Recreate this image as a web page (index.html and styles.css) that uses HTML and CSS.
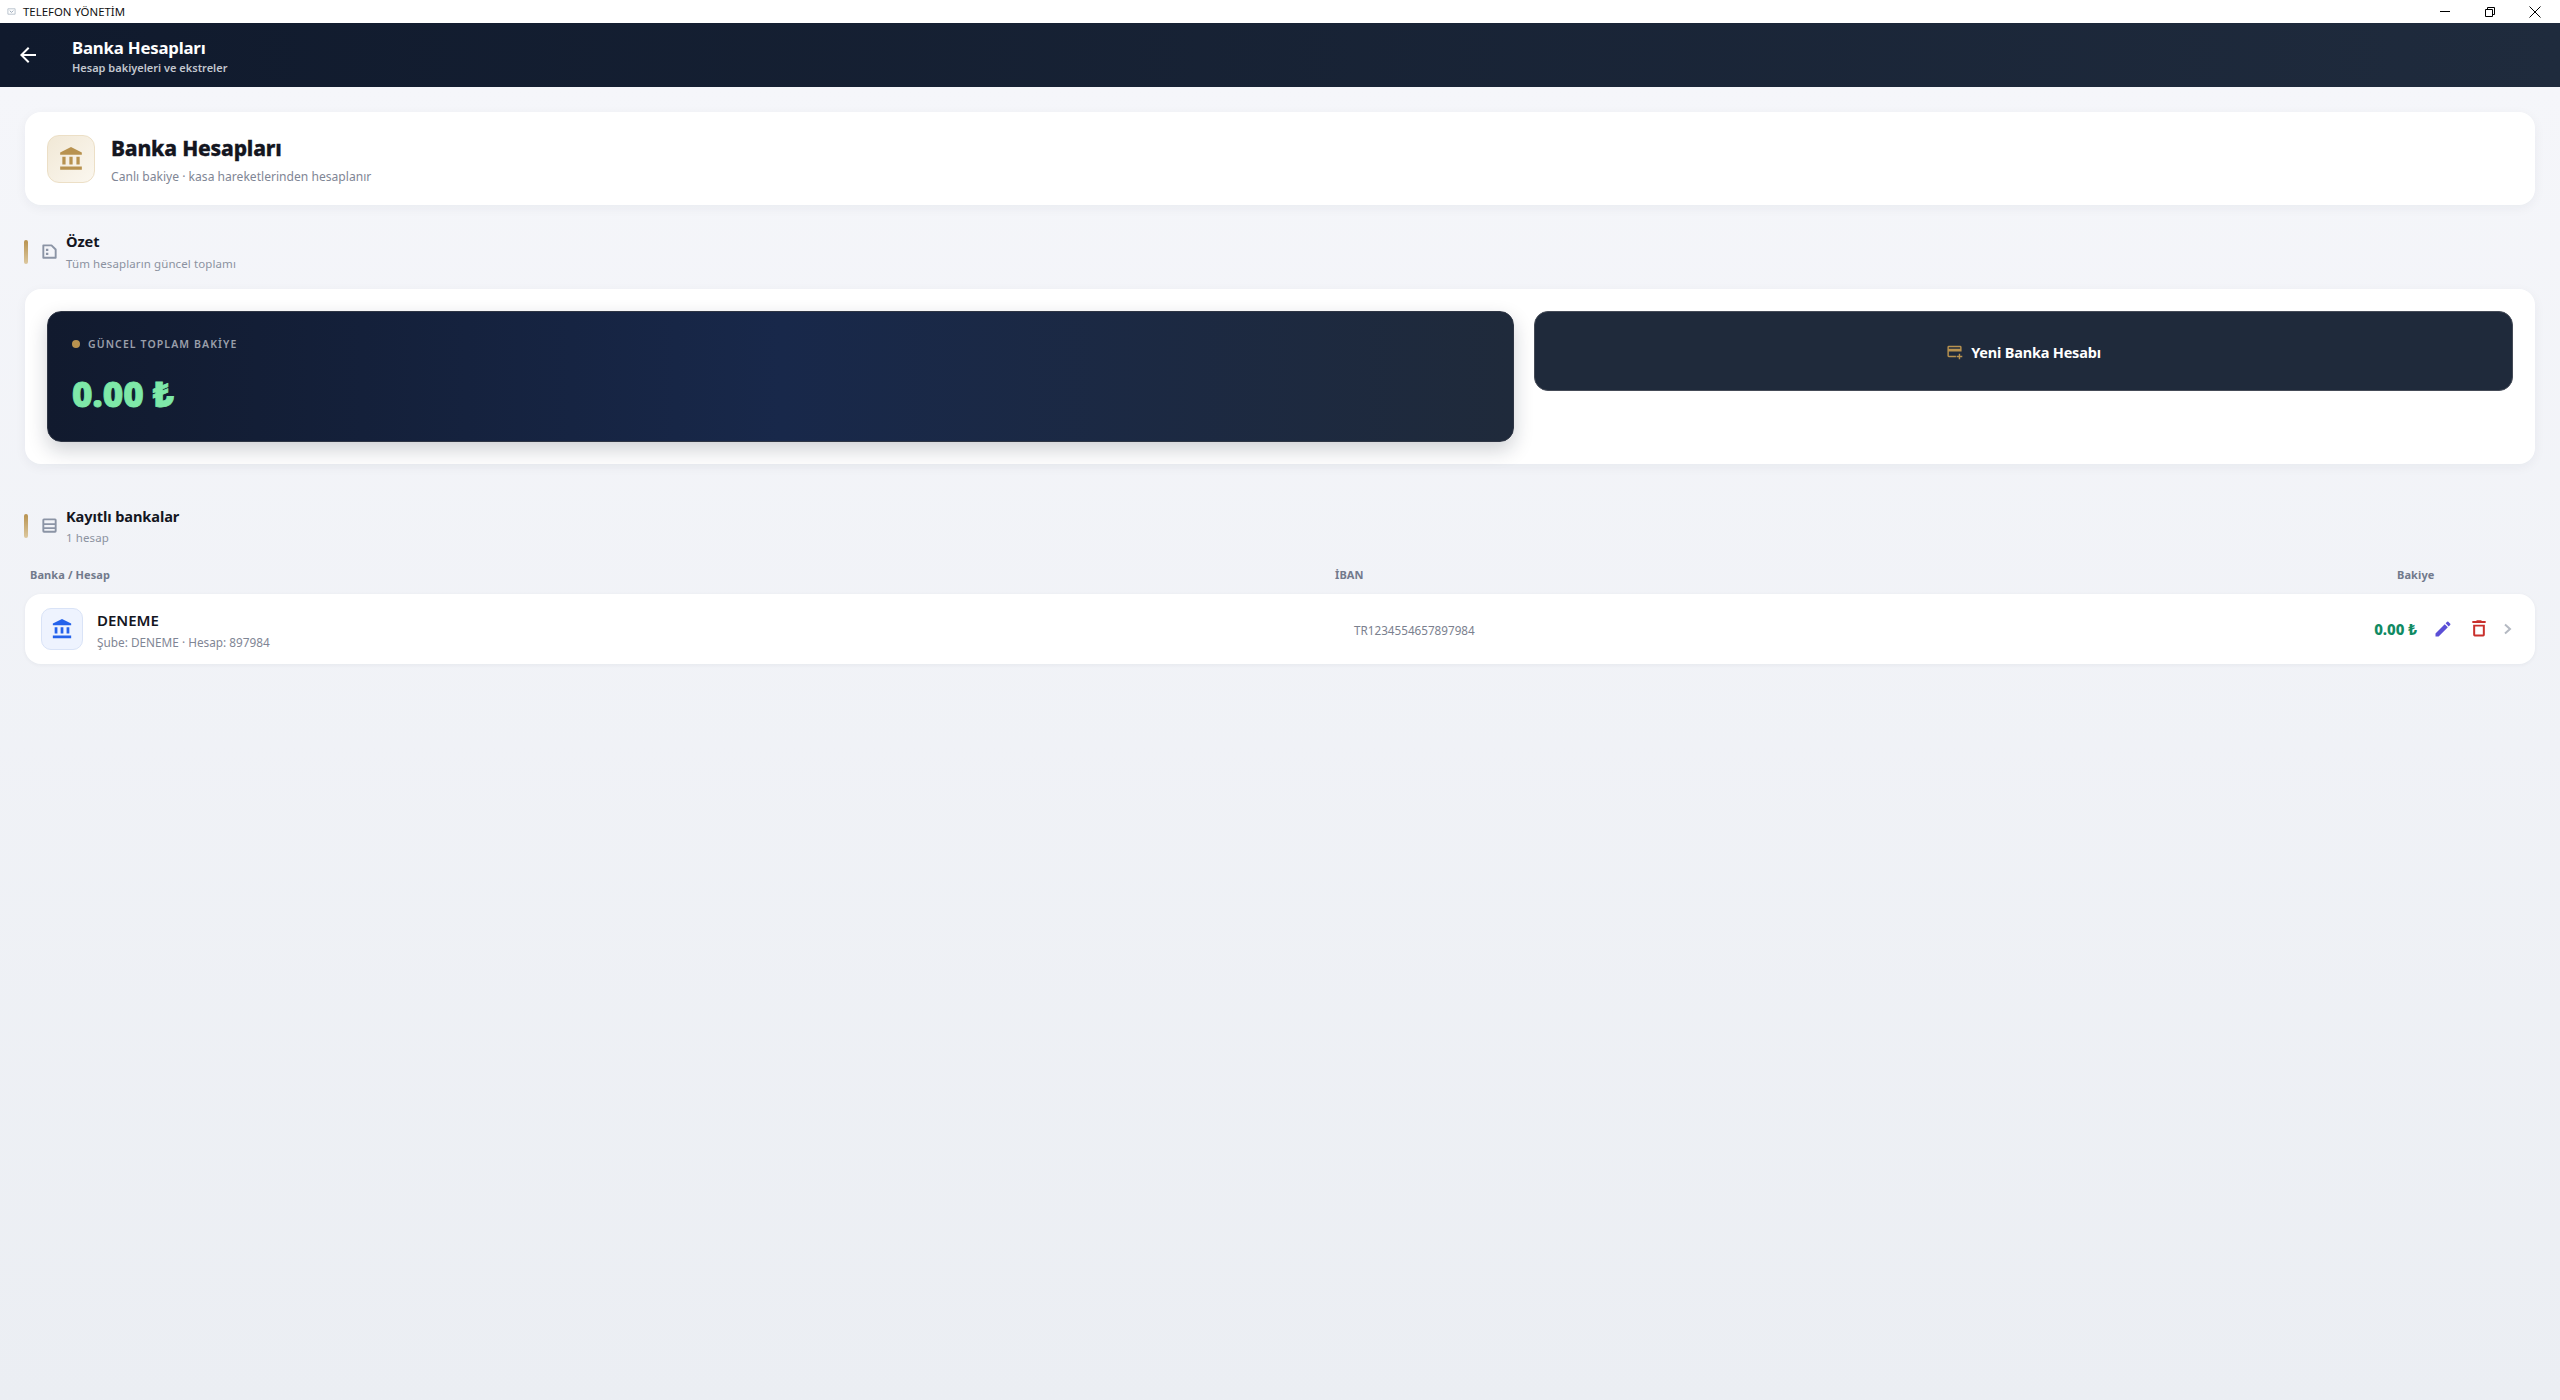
FILE: index.html
```html
<!DOCTYPE html>
<html lang="tr">
<head>
<meta charset="utf-8">
<title>TELEFON YÖNETİM</title>
<link rel="stylesheet" href="styles.css">
</head>
<body>
<div class="window">
  <header class="titlebar">
    <div class="titlebar-left">
      <svg class="app-icon" viewBox="0 0 10 10"><path d="M1 2h8v6H1z" fill="none" stroke="#b4bec9"/><path d="M3 4l2 2 2-2" fill="none" stroke="#8c9cb0"/></svg>
      <span>TELEFON YÖNETİM</span>
    </div>
    <div class="win-controls">
      <svg class="win-icon" viewBox="0 0 12 12"><path d="M1 5.500h10" stroke="#000" stroke-width="1"/></svg>
      <svg class="win-icon" viewBox="0 0 12 12"><path d="M1.500 3.500h7v7h-7zM3.500 3.500v-2h7v7h-2" fill="none" stroke="#000" stroke-width="1"/></svg>
      <svg class="win-icon" viewBox="0 0 12 12"><path d="M.5.500l11 11M11.500.500l-11 11" fill="none" stroke="#000" stroke-width="1"/></svg>
    </div>
  </header>

  <div class="appbar">
    <svg class="back" viewBox="0 0 24 24"><path d="M20 11H7.830l5.590-5.590L12 4l-8 8 8 8 1.410-1.410L7.830 13H20z" fill="#fff"/></svg>
    <div>
      <div class="appbar-title">Banka Hesapları</div>
      <div class="appbar-sub">Hesap bakiyeleri ve ekstreler</div>
    </div>
  </div>

  <main class="content">
    <section class="hero card">
      <div class="hero-icon">
        <svg viewBox="0 0 24 24"><path d="M4 10h3v7H4zM10.500 10h3v7h-3zM17 10h3v7h-3zM2 19h20v3H2zM12 1 2 6v2h20V6z" fill="#b8924f"/></svg>
      </div>
      <div class="hero-text">
        <h1>Banka Hesapları</h1>
        <p>Canlı bakiye · kasa hareketlerinden hesaplanır</p>
      </div>
    </section>

    <div class="section-head first">
      <span class="accent"></span>
      <svg class="section-icon" viewBox="0 0 24 24"><path d="M4.200 4.200h10.300l5.300 5.300v10.300H4.200z" fill="none" stroke="#8b94a5" stroke-width="2.400" stroke-linejoin="round"/><path d="M7.500 8.500h3v3h-3zM7.500 13.500h3v3h-3z" fill="#8b94a5"/></svg>
      <div>
        <h2>Özet</h2>
        <p>Tüm hesapların güncel toplamı</p>
      </div>
    </div>

    <section class="summary card">
      <div class="balance">
        <div class="balance-label"><span class="dot"></span>GÜNCEL TOPLAM BAKİYE</div>
        <div class="balance-value">0.00 ₺</div>
      </div>
      <button class="new-account">
        <svg viewBox="0 0 24 24"><path d="M20 4H4a2 2 0 0 0-2 2v12a2 2 0 0 0 2 2h10v-2H4v-6h18V6a2 2 0 0 0-2-2zm0 4H4V6h16zM20 15v3h3v2h-3v3h-2v-3h-3v-2h3v-3z" fill="#b8924f"/></svg>
        Yeni Banka Hesabı
      </button>
    </section>

    <div class="section-head second">
      <span class="accent"></span>
      <svg class="section-icon" viewBox="0 0 24 24"><path d="M3 5a2 2 0 0 1 2-2h14a2 2 0 0 1 2 2v14a2 2 0 0 1-2 2H5a2 2 0 0 1-2-2zm2.400.400v3.800h13.200V5.400zm0 6v2.800h13.200v-2.800zm0 5v2.200h13.200v-2.200z" fill="#8b94a5" fill-rule="evenodd"/></svg>
      <div>
        <h2>Kayıtlı bankalar</h2>
        <p>1 hesap</p>
      </div>
    </div>

    <div class="table-head">
      <span>Banka / Hesap</span>
      <span>İBAN</span>
      <span>Bakiye</span>
    </div>

    <section class="row">
      <div class="row-icon">
        <svg viewBox="0 0 24 24"><path d="M4 10h3v7H4zM10.500 10h3v7h-3zM17 10h3v7h-3zM2 19h20v3H2zM12 1 2 6v2h20V6z" fill="#2563eb"/></svg>
      </div>
      <div class="row-main">
        <div class="row-name">DENEME</div>
        <div class="row-sub">Şube: DENEME · Hesap: 897984</div>
      </div>
      <div class="row-iban">TR1234554657897984</div>
      <div class="row-balance">0.00 ₺</div>
      <svg class="row-action" viewBox="0 0 24 24"><path d="M3 17.250V21h3.750L17.810 9.940l-3.750-3.750zM20.710 7.040a1 1 0 0 0 0-1.410l-2.340-2.340a1 1 0 0 0-1.410 0l-1.830 1.830 3.750 3.750z" fill="#5b4fd6"/></svg>
      <svg class="row-action" viewBox="0 0 24 24"><path d="M5 19a2 2 0 0 0 2 2h10a2 2 0 0 0 2-2V7H5zM7.400 9h9.200v9.600H7.400zM15.500 2.500l-1-1h-5l-1 1H4v2.400h16V2.500z" fill="#c9302c" fill-rule="evenodd"/></svg>
      <svg class="row-chevron" viewBox="0 0 20 20"><path d="M7 5.500 12 10l-5 4.500" fill="none" stroke="#b4b9c2" stroke-width="2"/></svg>
    </section>
  </main>
</div>
</body>
</html>
```
FILE: styles.css
```css
* { box-sizing: border-box; }
html, body { margin: 0; height: 100%; }
body { font-family: "Noto Sans", "Open Sans", sans-serif; color: #14161f; background: #ebeef3; }
h1, h2, p { margin: 0; }

.window { height: 1400px; display: flex; flex-direction: column; overflow: hidden; }

.titlebar { height: 23px; flex: none; background: #fff; display: flex; justify-content: space-between; align-items: center; }
.titlebar-left { display: flex; align-items: center; font-size: 11.400px; color: #111; padding-left: 7px; gap: 7px; }
.app-icon { width: 9px; height: 9px; }
.win-controls { display: flex; gap: 33px; padding-right: 19px; }
.win-icon { width: 12px; height: 12px; display: block; }

.appbar { height: 64px; flex: none; display: flex; align-items: center; background: linear-gradient(90deg, #101a2d 0%, #1f2b3d 100%); color: #fff; }
.back { width: 24px; height: 24px; margin: 0 32px 0 16px; flex: none; }
.appbar-title { font-size: 16.800px; font-weight: 700; line-height: 24px; letter-spacing: -0.2px; }
.appbar-sub { font-size: 11px; font-weight: 600; line-height: 15px; color: #c3c7cf; }

.content { flex: 1; padding: 25px 25px 0; background: linear-gradient(180deg, #f5f6fa 0%, #ebeef3 100%); }

.card { background: #fff; border-radius: 16px; box-shadow: 0 3px 12px rgba(20, 30, 50, 0.05); }

.hero { height: 93px; display: flex; align-items: center; padding: 0 22px; gap: 16px; }
.hero-icon { width: 48px; height: 48px; border-radius: 12px; background: linear-gradient(135deg, #f1e8d6, #fbf7ef); border: 1px solid #ecdfc6; display: flex; align-items: center; justify-content: center; flex: none; }
.hero-icon svg { width: 26px; height: 26px; }
.hero-text { padding-top: 3px; }
.hero h1 { font-size: 21px; font-weight: 800; line-height: 29px; letter-spacing: -0.2px; color: #14161f; -webkit-text-stroke: 0.3px #14161f; }
.hero p { font-size: 12.100px; line-height: 20px; margin-top: 4px; color: #7f8695; }

.section-head { display: flex; align-items: center; height: 50px; }
.section-head.first { margin-top: 22px; }
.section-head.second { margin-top: 37px; }
.accent { width: 4px; height: 24px; margin-left: -1px; border-radius: 2px; background: linear-gradient(180deg, #b8924f, #dcc89f); flex: none; }
.section-icon { width: 19px; height: 19px; margin: -1px 7px 0 12px; flex: none; }
.section-head h2 { font-size: 14.600px; font-weight: 700; line-height: 22px; letter-spacing: -0.1px; color: #14161f; }
.section-head p { font-size: 11.500px; line-height: 22px; margin-top: 1px; color: #8b92a0; letter-spacing: 0.1px; }
.section-head.second h2 { padding-top: 2px; }
.section-head.second p { margin-top: 0; }

.summary { margin-top: 12px; height: 175px; padding: 22px; display: grid; grid-template-columns: 1467px 1fr; gap: 20px; align-items: start; }
.balance { height: 131px; border-radius: 14px; padding: 23px 24px; background: linear-gradient(90deg, #111a2e 0%, #18284a 50%, #1f2a3b 100%); border: 1px solid #2e3544; box-shadow: 0 8px 20px rgba(15, 25, 45, 0.2); }
.balance-label { display: flex; align-items: center; gap: 8px; font-size: 10.500px; font-weight: 600; letter-spacing: 1.100px; color: #9a9faa; line-height: 18px; }
.dot { width: 8px; height: 8px; border-radius: 50%; background: #b8924f; }
.balance-value { margin-top: 20px; font-size: 35px; font-weight: 900; line-height: 42px; color: #7ee8a8; -webkit-text-stroke: 0.8px #7ee8a8; }
.new-account { height: 80px; border-radius: 14px; border: 1px solid #454b57; background: #1f2a3b; color: #fff; font: 700 14.500px "Noto Sans", sans-serif; display: flex; align-items: center; justify-content: center; gap: 8px; letter-spacing: -0.2px; padding: 1px 0 0; }
.new-account svg { width: 17px; height: 17px; }

.table-head { height: 24px; margin-top: 12px; display: grid; grid-template-columns: 1305px 1fr 138px; padding-left: 5px; font-size: 11px; font-weight: 700; line-height: 24px; color: #727a8c; letter-spacing: 0.1px; }

.row { height: 70px; margin-top: 7px; background: #fff; border-radius: 16px; box-shadow: 0 1px 4px rgba(20, 30, 50, 0.05); display: flex; align-items: center; padding: 0 17px 0 16px; }
.row-icon { width: 42px; height: 42px; border-radius: 10px; background: #eef3fe; border: 1px solid #d9e3f7; display: flex; align-items: center; justify-content: center; flex: none; }
.row-icon svg { width: 22px; height: 22px; }
.row-main { width: 1257px; margin-left: 14px; flex: none; padding-top: 3px; }
.row-name { font-size: 15px; font-weight: 600; line-height: 24px; color: #14161f; }
.row-sub { font-size: 11.800px; line-height: 21px; color: #7f8695; }
.row-iban { flex: 1; font-size: 11.700px; padding-top: 1px; color: #7a808e; }
.row-balance { font-size: 15px; font-weight: 800; color: #108a63; margin-right: 16px; }
.row-action { width: 20px; height: 20px; margin-right: 16px; flex: none; }
.row-chevron { width: 20px; height: 20px; flex: none; margin-left: -7px; }
```
